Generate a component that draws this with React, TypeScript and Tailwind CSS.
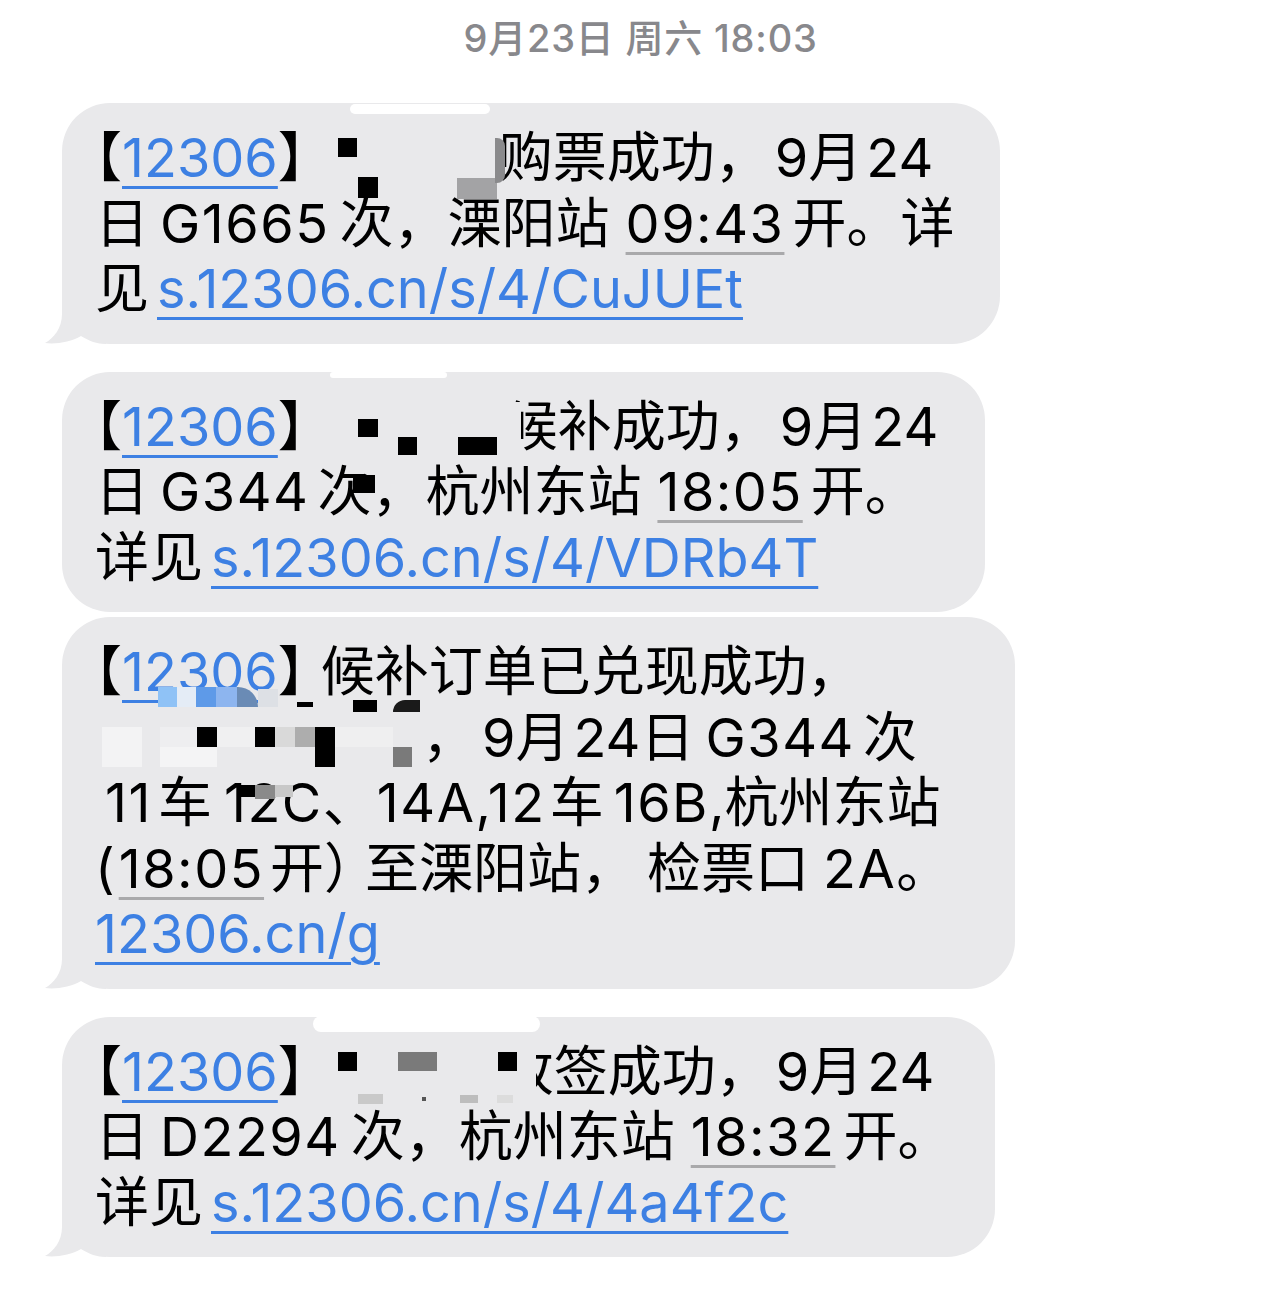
import React from "react";

const LINK =
  "text-[#3d80e3] underline decoration-[#3d80e3] decoration-[length:3px] underline-offset-[9px]";
const TIME =
  "tracking-[1.5px] underline decoration-[#a9a9ab] decoration-[length:3px] underline-offset-[9px]";
const NUM = "tracking-[1.5px]";

function H({ children }: { children: React.ReactNode }) {
  return <span className="[font-feature-settings:'halt']">{children}</span>;
}

function Tail() {
  return (
    <svg
      className="absolute -left-[18px] bottom-0"
      width="62"
      height="62"
      viewBox="0 0 62 62"
    >
      <path
        d="M18 0 L18 32 C18 46 10 56 1 61 C12 62.5 27 60 37 54 C45 59 53 62 62 62 L62 0 Z"
        fill="#e9e9eb"
      />
    </svg>
  );
}

function Bubble({
  w,
  tail,
  children,
  overlay,
}: {
  w: string;
  tail?: boolean;
  children: React.ReactNode;
  overlay?: React.ReactNode;
}) {
  return (
    <div
      className={`relative bg-[#e9e9eb] rounded-[48px] pl-[33px] py-[22px] text-[54px] leading-[65.5px] text-black whitespace-nowrap ${w}`}
    >
      {tail && <Tail />}
      <div className="relative">{children}</div>
      {overlay}
    </div>
  );
}

export default function App() {
  return (
    <div className="min-h-[1311px] w-[1267px] bg-white font-[family-name:Inter,'Noto_Sans_CJK_SC',sans-serif] pl-[62px]">
      <div className="pt-[10px] h-[66px] text-center pr-[48px] text-[38px] tracking-[0.8px] leading-[56px] text-[#88888c] font-medium">
        9月23日 周六 18:03
      </div>

      <div className="flex flex-col items-start mt-[37px]">
        {/* Bubble 1 */}
        <Bubble
          w="w-[938px]"
          tail
          overlay={
            <>
              <div className="absolute left-[288px] top-[1px] w-[140px] h-[10px] rounded-full bg-white" />
              <div className="absolute left-[276px] top-[35px] w-[19px] h-[19px] bg-black" />
              <div className="absolute left-[296px] top-[74px] w-[20px] h-[21px] bg-black" />
              <div className="absolute left-[395px] top-[75px] w-[40px] h-[21px] bg-[#a3a3a5]" />
              <div className="absolute left-[433px] top-[35px] w-[10px] h-[45px] rounded-r-[8px] bg-[#8a8a8c]" />
            </>
          }
        >
          <div>
            <H>【</H>
            <span className={LINK}>12306</span>
            <H>】</H>
            <span className="inline-block w-[194px]" />
            购票成功，<span className="ml-[6px]">9</span>月<span className="ml-[4px]">24</span>
          </div>
          <div>
            日<span className={`${NUM} ml-[11px] mr-[10px]`}>G1665</span>次，溧阳站
            <span className={`${TIME} ml-[16px] mr-[8px]`}>09:43</span>开。详
          </div>
          <div>
            见<span className={`${LINK} ml-[8px]`}>s.12306.cn/s/4/CuJUEt</span>
          </div>
        </Bubble>

        {/* Bubble 2 */}
        <div className="mt-[28px]">
          <Bubble
            w="w-[923px]"
            overlay={
              <>
                <div className="absolute left-[268px] top-0 w-[117px] h-[6px] rounded-full bg-white" />
                <div className="absolute left-[443px] top-[30px] w-[16px] h-[55px] bg-[#e9e9eb]" />
                <div className="absolute left-[296px] top-[47px] w-[20px] h-[18px] bg-black" />
                <div className="absolute left-[336px] top-[65px] w-[19px] h-[18px] bg-black" />
                <div className="absolute left-[396px] top-[65px] w-[39px] h-[18px] bg-black" />
                <div className="absolute left-[291px] top-[103px] w-[22px] h-[18px] bg-black" />
              </>
            }
          >
            <div>
              <H>【</H>
              <span className={LINK}>12306</span>
              <H>】</H>
              <span className="inline-block w-[199px]" />
              候补成功，<span className="ml-[6px]">9</span>月<span className="ml-[4px]">24</span>
            </div>
            <div>
              日<span className={`${NUM} ml-[11px] mr-[8px]`}>G344</span>次，杭州东站
              <span className={`${TIME} ml-[16px] mr-[8px]`}>18:05</span>开。
            </div>
            <div>
              详见<span className={`${LINK} ml-[8px]`}>s.12306.cn/s/4/VDRb4T</span>
            </div>
          </Bubble>
        </div>

        {/* Bubble 3 */}
        <div className="mt-[5px]">
          <Bubble
            w="w-[953px]"
            tail
            overlay={
              <>
                <div className="absolute left-[96px] top-[70px] w-[19px] h-[20px] bg-[#8fc2f6]" />
                <div className="absolute left-[115px] top-[70px] w-[19px] h-[20px] bg-[#e4ecf6]" />
                <div className="absolute left-[134px] top-[70px] w-[20px] h-[20px] bg-[#5e9ae8]" />
                <div className="absolute left-[154px] top-[70px] w-[21px] h-[20px] bg-[#8db5ef]" />
                <div className="absolute left-[175px] top-[70px] w-[21px] h-[20px] rounded-tr-full bg-[#6a8bb5]" />
                <div className="absolute left-[196px] top-[72px] w-[20px] h-[18px] bg-[#dde0e5]" />
                <div className="absolute left-[235px] top-[85px] w-[16px] h-[5px] bg-black" />
                <div className="absolute left-[291px] top-[83px] w-[24px] h-[12px] bg-black" />
                <div className="absolute left-[331px] top-[83px] w-[27px] h-[12px] rounded-tl-full bg-[#1a1a1a]" />

                <div className="absolute left-[40px] top-[110px] w-[40px] h-[40px] bg-[#f3f3f4]" />
                <div className="absolute left-[98px] top-[110px] w-[37px] h-[20px] bg-[#eeeef0]" />
                <div className="absolute left-[98px] top-[130px] w-[57px] h-[20px] bg-[#f4f4f5]" />
                <div className="absolute left-[155px] top-[110px] w-[38px] h-[20px] bg-[#f0f0f1]" />
                <div className="absolute left-[135px] top-[110px] w-[20px] h-[20px] bg-black" />
                <div className="absolute left-[193px] top-[110px] w-[20px] h-[20px] bg-black" />
                <div className="absolute left-[213px] top-[110px] w-[20px] h-[20px] bg-[#d9d9d9]" />
                <div className="absolute left-[233px] top-[110px] w-[20px] h-[20px] bg-[#adadad]" />
                <div className="absolute left-[253px] top-[110px] w-[20px] h-[40px] bg-black" />
                <div className="absolute left-[273px] top-[110px] w-[58px] h-[20px] bg-[#efeff0]" />
                <div className="absolute left-[331px] top-[130px] w-[19px] h-[20px] bg-[#7a7a7a]" />

                <div className="absolute left-[175px] top-[168px] w-[18px] h-[12px] bg-black" />
                <div className="absolute left-[193px] top-[168px] w-[20px] h-[14px] bg-[#8a8a8a]" />
                <div className="absolute left-[213px] top-[168px] w-[18px] h-[12px] bg-[#c8c8c8]" />
              </>
            }
          >
            <div>
              <H>【</H>
              <span className={LINK}>12306</span>
              <H>】</H>
              <span className="ml-[16px]">候补订单已兑现成功，</span>
            </div>
            <div>
              <span className="inline-block w-[327px]" />，<span className="ml-[6px]">9</span>月
              <span className="ml-[4px]">24</span>日
              <span className={`${NUM} ml-[11px] mr-[8px]`}>G344</span>次
            </div>
            <div>
              <span className={`${NUM} ml-[10px] mr-[6px]`}>11</span>车
              <span className={`${NUM} ml-[12px]`}>12C</span>、
              <span className={NUM}>14A,12</span>
              <span className="ml-[4px]">车</span>
              <span className={`${NUM} ml-[10px]`}>16B</span>,杭州东站
            </div>
            <div>
              (<span className={`${TIME} ml-[4px] mr-[6px]`}>18:05</span>开<H>）</H>
              <span className="ml-[14px]">至溧阳站，</span>
              <span className="ml-[12px]">检票口</span>
              <span className={`${NUM} ml-[14px]`}>2A</span>。
            </div>
            <div>
              <span className={LINK}>12306.cn/g</span>
            </div>
          </Bubble>
        </div>

        {/* Bubble 4 */}
        <div className="mt-[28px]">
          <Bubble
            w="w-[933px]"
            tail
            overlay={
              <>
                <div className="absolute left-[251px] -top-[1px] w-[227px] h-[16px] rounded-full bg-white" />
                <div className="absolute left-[439px] top-[28px] w-[35px] h-[55px] bg-[#e9e9eb]" />
                <div className="absolute left-[276px] top-[35px] w-[19px] h-[19px] bg-black" />
                <div className="absolute left-[336px] top-[35px] w-[39px] h-[19px] bg-[#7a7a7a]" />
                <div className="absolute left-[436px] top-[35px] w-[19px] h-[19px] bg-black" />
                <div className="absolute left-[296px] top-[77px] w-[25px] h-[10px] bg-[#c9c9c9]" />
                <div className="absolute left-[360px] top-[80px] w-[4px] h-[4px] bg-[#555]" />
                <div className="absolute left-[398px] top-[78px] w-[18px] h-[8px] bg-[#bdbdbd]" />
                <div className="absolute left-[435px] top-[78px] w-[16px] h-[8px] bg-[#dcdcdc]" />
              </>
            }
          >
            <div>
              <H>【</H>
              <span className={LINK}>12306</span>
              <H>】</H>
              <span className="inline-block w-[195px]" />
              改签成功，<span className="ml-[6px]">9</span>月<span className="ml-[4px]">24</span>
            </div>
            <div>
              日<span className={`${NUM} ml-[11px] mr-[10px]`}>D2294</span>次，杭州东站
              <span className={`${TIME} ml-[16px] mr-[8px]`}>18:32</span>开。
            </div>
            <div>
              详见<span className={`${LINK} ml-[8px]`}>s.12306.cn/s/4/4a4f2c</span>
            </div>
          </Bubble>
        </div>
      </div>
    </div>
  );
}
